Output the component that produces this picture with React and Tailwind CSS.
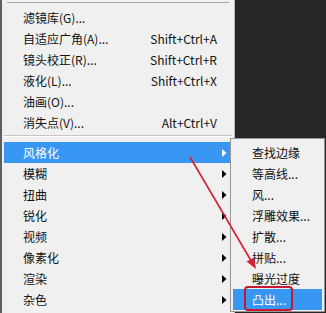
import React from "react";

const font = { fontFamily: '"Noto Sans CJK SC", "Noto Sans", sans-serif' };

function Arrow({ white }) {
  return (
    <svg width="5" height="8" viewBox="0 0 5 8" className="shrink-0">
      <path d="M0 0 L4.5 4 L0 8 Z" fill={white ? "#ffffff" : "#000000"} />
    </svg>
  );
}

function Row({ label, shortcut }) {
  return (
    <div className="flex items-center justify-between h-[21px] pl-[21px] pr-[17px] text-[12px] text-[#111]">
      <span>{label}</span>
      {shortcut && <span>{shortcut}</span>}
    </div>
  );
}

function SubRow({ label, active }) {
  if (active) {
    return (
      <div className="mx-[2px] flex items-center justify-between h-[21px] pl-[19px] pr-[5px] bg-[#3797f2] text-[12px] text-white">
        <span>{label}</span>
        <Arrow white />
      </div>
    );
  }
  return (
    <div className="flex items-center justify-between h-[21px] pl-[21px] pr-[7px] text-[12px] text-[#111]">
      <span>{label}</span>
      <Arrow />
    </div>
  );
}

export default function App() {
  const top = [
    ["滤镜库(G)...", ""],
    ["自适应广角(A)...", "Shift+Ctrl+A"],
    ["镜头校正(R)...", "Shift+Ctrl+R"],
    ["液化(L)...", "Shift+Ctrl+X"],
    ["油画(O)...", ""],
    ["消失点(V)...", "Alt+Ctrl+V"],
  ];
  const subs = ["模糊", "扭曲", "锐化", "视频", "像素化", "渲染", "杂色"];
  const sub2 = ["查找边缘", "等高线...", "风...", "浮雕效果...", "扩散...", "拼贴...", "曝光过度"];
  return (
    <div className="relative w-[326px] h-[313px] bg-[#262626] overflow-hidden flex" style={font}>
      <div className="w-[235px] h-full bg-[#f0f0f0] border-l-2 border-l-[#5e5e5e] border-r border-r-[#b8b8b8] flex flex-col">
        <div className="mt-[2px] mx-[5px] h-px bg-[#a8a8a8]" />
        <div className="mt-[4px] flex flex-col">
          {top.map(([l, s]) => (
            <Row key={l} label={l} shortcut={s} />
          ))}
        </div>
        <div className="mt-[2px] mx-[2px] h-px bg-[#c6c6c6]" />
        <div className="h-px bg-white mx-[2px]" />
        <div className="mt-[5px] flex flex-col">
          <SubRow label="风格化" active />
          {subs.map((l) => (
            <SubRow key={l} label={l} />
          ))}
        </div>
      </div>

      <div className="absolute left-[230px] top-[138px] w-[95px] h-[174px] bg-[#f0f0f0] border border-[#979797] pt-[3px] flex flex-col">
        {sub2.map((l) => (
          <div key={l} className="h-[21px] flex items-center pl-[21px] text-[12px] text-[#111] whitespace-nowrap">
            {l}
          </div>
        ))}
        <div className="mx-[2px] h-[21px] flex items-center pl-[19px] bg-[#3797f2] text-[12px] text-white">
          凸出...
        </div>
      </div>

      <div className="absolute left-[244px] top-[286px] w-[49px] h-[25px] border-2 border-[#c8172e] rounded-[4px]" />

      <svg className="absolute left-0 top-0 pointer-events-none" width="326" height="313" viewBox="0 0 326 313">
        <line x1="190" y1="157" x2="253" y2="264" stroke="#d42030" strokeWidth="1.6" />
        <path d="M256 269 L246.5 261.5 L254 258 Z" fill="#d42030" />
      </svg>
    </div>
  );
}
